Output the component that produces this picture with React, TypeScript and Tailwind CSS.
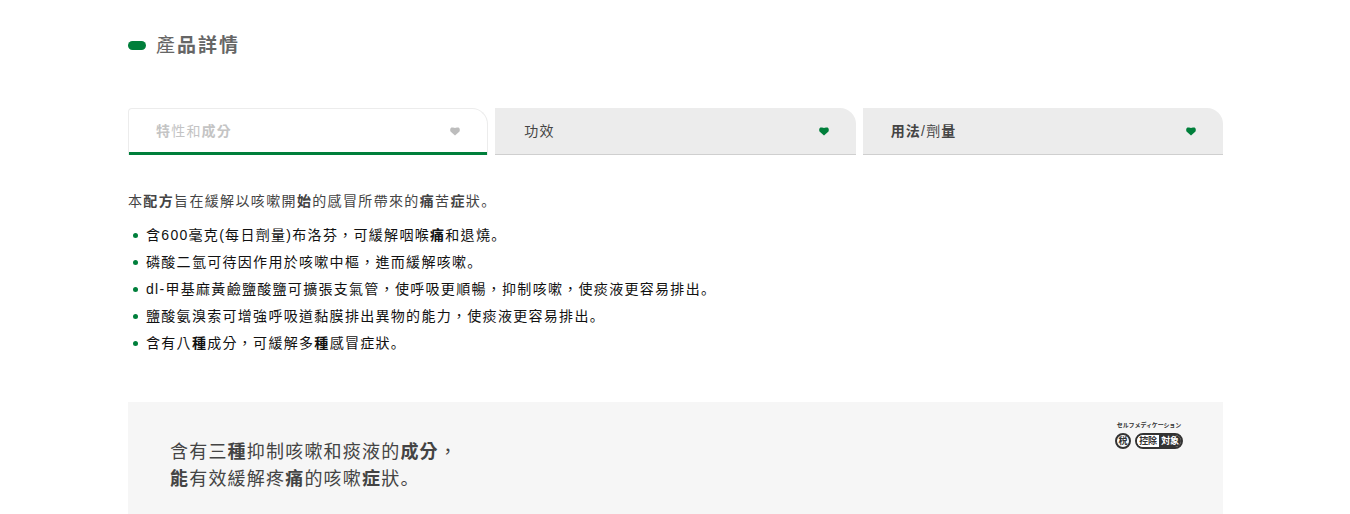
import React from 'react';

const FONT = "font-['Liberation_Sans','Noto_Sans_CJK_TC',sans-serif]";

const Heart = ({ className }: { className: string }) => (
  <svg viewBox="0 0 10 9" className={`w-[10px] h-[9px] ${className}`} fill="currentColor">
    <path d="M5 8.6 L0.5 4.4 C0 3.8 0 1 1.4 0.6 C3 0.2 4.4 0.4 5 1 C5.6 0.4 7 0.2 8.6 0.6 C10 1 10 3.8 9.5 4.4 Z" />
  </svg>
);

// the full stop sits low and to the left in the reference
const Stop = () => <span className="font-['Noto_Sans_CJK_JP'] leading-none">。</span>;

const tabs = [
  { key: 'a', label: <><b>特</b>性和<b>成分</b></>, active: true, pad: 'pl-[27px]' },
  { key: 'b', label: <>功效</>, active: false, pad: 'pl-[29px]' },
  { key: 'c', label: <><b>用法</b>/劑<b>量</b></>, active: false, pad: 'pl-[28px]' },
];

const bullets = [
  <>含600毫克(每日劑量)布洛芬，可緩解咽喉<b>痛</b>和退燒<Stop /></>,
  <>磷酸二氫可待因作用於咳嗽中樞，進而緩解咳嗽<Stop /></>,
  <>dl-甲基麻黃鹼鹽酸鹽可擴張支氣管，使呼吸更順暢，抑制咳嗽，使痰液更容易排出<Stop /></>,
  <>鹽酸氨溴索可增強呼吸道黏膜排出異物的能力，使痰液更容易排出<Stop /></>,
  <>含有八<b>種</b>成分，可緩解多<b>種</b>感冒症狀<Stop /></>,
];

const Logo = () => (
  <div className="flex flex-col items-center w-[68px] shrink-0">
    <span className="text-[6px] leading-[9px] font-bold text-[#333] whitespace-nowrap tracking-[-0.1px]">セルフメディケーション</span>
    <div className="flex items-center gap-[4px] mt-[3px]">
      <span className="w-[16px] h-[16px] rounded-full border-2 border-[#333] bg-white flex items-center justify-center text-[9px] leading-none font-bold text-[#333]">税</span>
      <span className="flex h-[16px] w-[48px] rounded-full border-2 border-[#333] overflow-hidden text-[9px] font-bold leading-[12px] tracking-[-0.3px]">
        <span className="w-[24px] bg-white text-[#333] text-center whitespace-nowrap">控除</span>
        <span className="w-[24px] bg-[#333] text-white text-center whitespace-nowrap">対象</span>
      </span>
    </div>
  </div>
);

export default function App() {
  return (
    <div className={`${FONT} bg-white h-[514px] overflow-hidden px-[128px] w-[1350px]`}>
      <div className="flex items-center gap-[10px] pt-[31px] h-[60px]">
        <span className="w-[18px] h-[9px] rounded-full bg-[#007f3b]" />
        <h2 className="text-[19px] leading-[28px] tracking-[2px] text-[#666]">產<b>品詳情</b></h2>
      </div>

      <div className="grid grid-cols-3 gap-[7px] mt-[48px] w-[1095px]">
        {tabs.map((t) =>
          <div
            key={t.key}
            className={`h-[47px] rounded-tr-[16px] flex items-center justify-between ${t.pad} pr-[27px] text-[14px] tracking-[1.2px] ${
              t.active
                ? 'bg-white border border-b-0 border-[#ececec] rounded-tl-[4px] pb-[2px] text-[#c4c4c4] shadow-[inset_0_-3px_0_#007f3b]'
                : 'bg-[#ececec] border-b border-[#cfcfcf] text-[#444]'
            }`}
          >
            <span>{t.label}</span>
            <Heart className={t.active ? 'text-[#bdbdbd]' : 'text-[#007f3b]'} />
          </div>
        )}
      </div>

      <p className="mt-[35px] text-[14px] leading-[22px] tracking-[1.35px] text-[#444]">
        本<b>配方</b>旨在緩解以咳嗽開<b>始</b>的感冒所帶來的<b>痛</b>苦<b>症</b>狀<Stop />
      </p>

      <ul className="mt-[10px] flex flex-col">
        {bullets.map((b, i) =>
          <li key={i} className="h-[27px] flex items-center gap-[8px] pl-[5px] text-[14px] tracking-[1.3px] text-[#111]">
            <span className="w-[5px] h-[5px] rounded-full bg-[#007f3b] shrink-0" />
            <span>{b}</span>
          </li>
        )}
      </ul>

      <div className="mt-[45px] h-[112px] bg-[#f6f6f6] flex justify-between pl-[42px] pr-[40px] w-[1095px]">
        <p className="pt-[37px] text-[18px] leading-[27px] tracking-[1.2px] text-[#444]">
          含有三<b>種</b>抑制咳嗽和痰液的<b>成分</b>，<br />
          <b>能</b>有效緩解疼<b>痛</b>的咳嗽<b>症</b>狀<Stop />
        </p>
        <div className="pt-[19px]"><Logo /></div>
      </div>
    </div>
  );
}
